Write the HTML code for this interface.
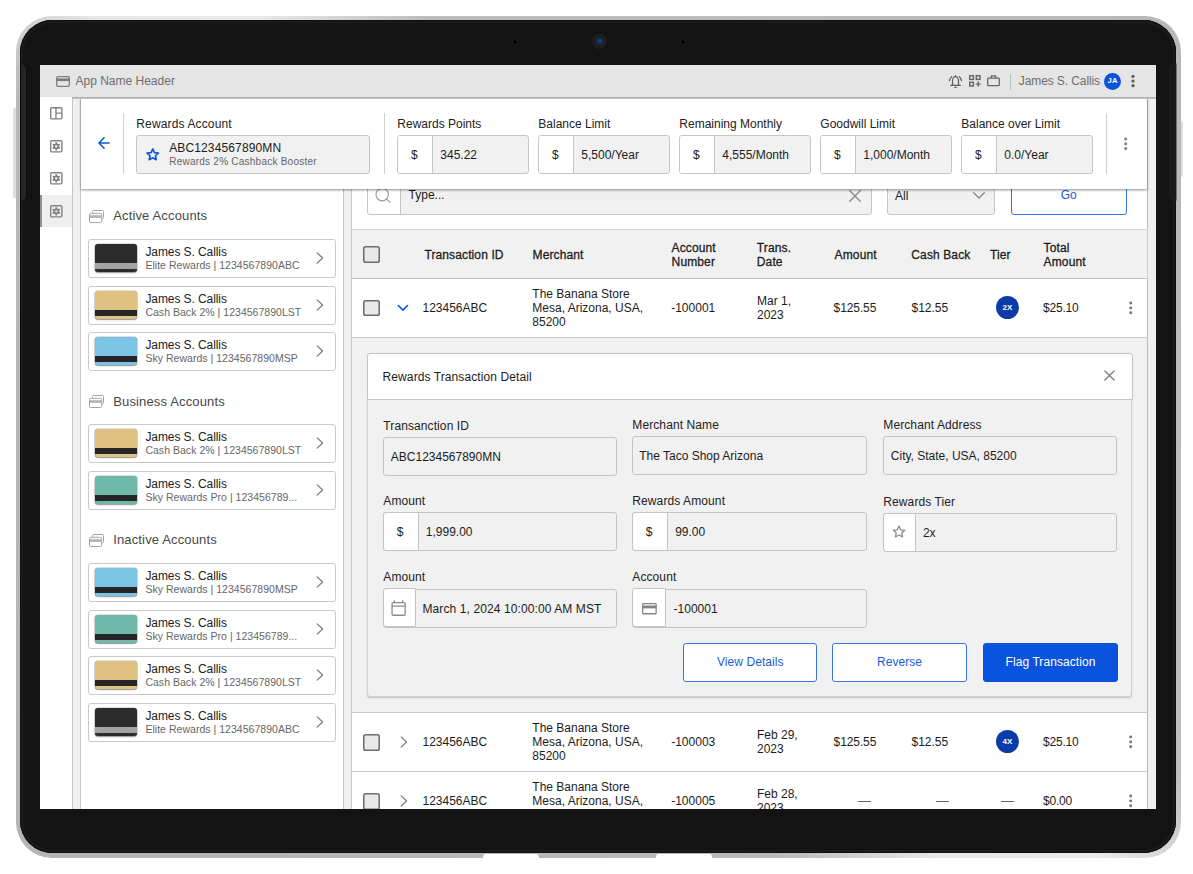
<!DOCTYPE html>
<html>
<head>
<meta charset="utf-8">
<title>Rewards Account</title>
<style>
*{box-sizing:border-box;margin:0;padding:0}
html,body{width:1193px;height:874px;background:#fff;overflow:hidden}
body{font-family:"Liberation Sans",sans-serif;font-size:12px;color:#1c1c1c;position:relative}
.a{position:absolute}
.t{position:absolute;white-space:nowrap;line-height:14px}
svg{position:absolute;overflow:visible}
#silver{left:16px;top:16px;width:1164.5px;height:841.5px;border-radius:36px;background:linear-gradient(45deg,#b4b4b4 0%,#b9b9b9 38%,#e7e7e7 46%,#e9e9e9 54%,#bebebe 62%,#b8b8b8 100%)}
#blk{left:20px;top:20px;width:1156px;height:833px;border-radius:32.5px;background:#131313;box-shadow:inset 0 0 0 .8px #0b0b0b, inset 0 0 0 3.2px #1b1b1b}
.sbtn{background:#dedede;border-radius:2px}
#screen{left:40px;top:65px;width:1116px;height:744px;overflow:hidden;background:#fff}
#pg{left:-40px;top:-65px;width:1193px;height:874px}
#hdr{left:40px;top:65px;width:1116px;height:32px;background:#e5e5e5}
#hdrsh{left:40px;top:96.5px;width:1116px;height:2px;background:linear-gradient(#a9a9a9,#c9c9c9)}
.g{color:#6e6e6e}
.strip{background:#f0f0f0;border-left:1px solid #c6c6c6;border-right:1px solid #c9c9c9}
#top{left:80.5px;top:98px;width:1066.5px;height:91px;background:#fff;box-shadow:0 1px 2.5px rgba(0,0,0,.45)}
.vd{width:1px;background:#cfcfcf}
.fld{position:absolute;height:39px;border:1px solid #c6c6c6;border-radius:3px;background:#f1f1f1;overflow:hidden}
.pre{position:absolute;left:0;top:0;bottom:0;width:35px;background:#fff;border-right:1px solid #c6c6c6}
.lbl{position:absolute;white-space:nowrap;line-height:14px;color:#222}
.blue{color:#1a5cd6}
.sec{position:absolute;white-space:nowrap;line-height:14px;font-size:13px;letter-spacing:.15px;color:#474747;left:113.2px}
.acc{position:absolute;left:88px;width:248px;height:38.5px;border:1px solid #c9c9c9;border-radius:3px;background:#fff}
.th{position:absolute;left:6.1px;top:4.2px;width:42px;height:27.6px;border-radius:3px;overflow:hidden;box-shadow:0 1px 1.5px rgba(0,0,0,.35),0 0 0 .5px rgba(0,0,0,.25)}
.th i{position:absolute;left:0;right:0;top:18.4px;height:6px;background:#252525}
.acc .n{position:absolute;left:56.4px;top:5px;white-space:nowrap;line-height:14px;letter-spacing:-.08px}
.acc .d{position:absolute;left:56.4px;top:18.2px;white-space:nowrap;line-height:14px;font-size:10.5px;letter-spacing:.03px;color:#666}
.acc svg{left:226.5px;top:11.6px}
.th2{position:absolute;white-space:nowrap;line-height:14px;color:#1c1c1c;-webkit-text-stroke:.28px #1c1c1c;letter-spacing:.12px}
.cb{position:absolute;left:363.3px;width:16.4px;height:16.4px;border-radius:2.6px;background:#e9e9e9;box-shadow:inset 0 0 0 1.55px #6e6e6e}
.td{position:absolute;white-space:nowrap;line-height:14px}
.hl{position:absolute;height:1px;background:#c8c8c8;left:352px;width:795.5px}
.badge{position:absolute;left:996px;width:23px;height:23px;border-radius:50%;background:#0b3ba6;color:#fff;font-weight:700;font-size:8px;line-height:23px;text-align:center;letter-spacing:.2px}
.dash{position:absolute;height:1.5px;width:13px;background:#666}
.inp{position:absolute;width:234px;height:39px;border:1px solid #c4c4c4;border-radius:3px;background:#f1f1f1}
.inp .pre{left:-1px;top:-1px;bottom:-1px;border:1px solid #c4c4c4;border-radius:3px 0 0 3px}
.inp .pre.up{top:-2px;bottom:0}
.inp .v{position:absolute;white-space:nowrap;line-height:14px;top:12px}
.btn{position:absolute;top:643px;width:134px;height:38.5px;border:1px solid #3a76de;border-radius:3px;background:#fff;color:#1a5cd6;text-align:center;line-height:36.5px;letter-spacing:.07px}
</style>
</head>
<body>
<!-- tablet frame -->
<div class="a sbtn" style="left:12.8px;top:108px;width:5px;height:90px"></div>
<div class="a sbtn" style="left:1178px;top:120.5px;width:5px;height:56px"></div>
<div class="a" id="silver"></div>
<div class="a" style="left:483px;top:854.3px;width:56px;height:5px;background:#fff;border-radius:3px 3px 0 0"></div>
<div class="a" style="left:656px;top:854.3px;width:56px;height:5px;background:#fff;border-radius:3px 3px 0 0"></div>
<div class="a" id="blk"></div>
<div class="a" style="left:20.5px;top:63.5px;width:5.3px;height:137px;background:#252525;border-radius:0 5px 5px 0;box-shadow:0 0 0 .6px #0a0a0a"></div>
<div class="a" style="left:1170px;top:64px;width:5.5px;height:136px;background:#1a1a1a;border-radius:5px 0 0 5px;box-shadow:0 0 0 .5px #2a2a2a"></div>
<div class="a" style="left:591.5px;top:33.5px;width:15px;height:15px;border-radius:50%;background:#1f1f1f"></div>
<div class="a" style="left:595.5px;top:37.5px;width:7px;height:7px;border-radius:50%;background:radial-gradient(circle at 58% 38%,#1d4686 0,#152d52 50%,#0f1826 100%)"></div>
<div class="a" style="left:513px;top:39.5px;width:4px;height:4px;border-radius:50%;background:#000;box-shadow:0 0 0 1px #1d1d1d"></div>
<div class="a" style="left:680.5px;top:39.5px;width:4px;height:4px;border-radius:50%;background:#000;box-shadow:0 0 0 1px #1d1d1d"></div>

<div class="a" id="screen"><div class="a" id="pg">
<!-- base columns -->
<div class="a strip" style="left:72px;top:97px;width:8.5px;height:720px"></div>
<div class="a strip" style="left:343px;top:97px;width:9px;height:720px"></div>
<div class="a strip" style="left:1147px;top:97px;width:9px;height:720px;border-right:0;border-left-color:#b9b9b9"></div>

<!-- left panel -->
<svg style="left:89px;top:209.8px" width="15" height="13" viewBox="0 0 15 13" fill="none" stroke="#a3a3a3" stroke-width="1"><path d="M3.6 2.8V1.5a1 1 0 0 1 1-1h8.9a1 1 0 0 1 1 1v6a1 1 0 0 1-1 1h-1"/><rect x=".5" y="3.3" width="12.2" height="9.2" rx="1.3" fill="#fff"/><rect x=".9" y="5.2" width="11.4" height="2.7" fill="#b4b4b4" stroke="none"/></svg><div class="sec" style="top:209.4px">Active Accounts</div>
<div class="acc" style="top:239px"><div class="th" style="background:#2c2c2c"><i style="background:#a3a3a3"></i></div><div class="n">James S. Callis</div><div class="d">Elite Rewards | 1234567890ABC</div><svg width="8" height="12" viewBox="0 0 8 12" fill="none" stroke="#7d7d7d" stroke-width="1.3" stroke-linecap="round" stroke-linejoin="round"><path d="M1.2 .9 6.6 6l-5.4 5.1"/></svg></div>
<div class="acc" style="top:286px"><div class="th" style="background:#dfc27f"><i style="background:#252525"></i></div><div class="n">James S. Callis</div><div class="d">Cash Back 2% | 1234567890LST</div><svg width="8" height="12" viewBox="0 0 8 12" fill="none" stroke="#7d7d7d" stroke-width="1.3" stroke-linecap="round" stroke-linejoin="round"><path d="M1.2 .9 6.6 6l-5.4 5.1"/></svg></div>
<div class="acc" style="top:332px"><div class="th" style="background:#7bc4e6"><i style="background:#252525"></i></div><div class="n">James S. Callis</div><div class="d">Sky Rewards | 1234567890MSP</div><svg width="8" height="12" viewBox="0 0 8 12" fill="none" stroke="#7d7d7d" stroke-width="1.3" stroke-linecap="round" stroke-linejoin="round"><path d="M1.2 .9 6.6 6l-5.4 5.1"/></svg></div>
<svg style="left:89px;top:395px" width="15" height="13" viewBox="0 0 15 13" fill="none" stroke="#a3a3a3" stroke-width="1"><path d="M3.6 2.8V1.5a1 1 0 0 1 1-1h8.9a1 1 0 0 1 1 1v6a1 1 0 0 1-1 1h-1"/><rect x=".5" y="3.3" width="12.2" height="9.2" rx="1.3" fill="#fff"/><rect x=".9" y="5.2" width="11.4" height="2.7" fill="#b4b4b4" stroke="none"/></svg><div class="sec" style="top:394.6px">Business Accounts</div>
<div class="acc" style="top:424px"><div class="th" style="background:#dfc27f"><i style="background:#252525"></i></div><div class="n">James S. Callis</div><div class="d">Cash Back 2% | 1234567890LST</div><svg width="8" height="12" viewBox="0 0 8 12" fill="none" stroke="#7d7d7d" stroke-width="1.3" stroke-linecap="round" stroke-linejoin="round"><path d="M1.2 .9 6.6 6l-5.4 5.1"/></svg></div>
<div class="acc" style="top:471px"><div class="th" style="background:#6fb9ab"><i style="background:#252525"></i></div><div class="n">James S. Callis</div><div class="d">Sky Rewards Pro | 123456789...</div><svg width="8" height="12" viewBox="0 0 8 12" fill="none" stroke="#7d7d7d" stroke-width="1.3" stroke-linecap="round" stroke-linejoin="round"><path d="M1.2 .9 6.6 6l-5.4 5.1"/></svg></div>
<svg style="left:89px;top:533.6px" width="15" height="13" viewBox="0 0 15 13" fill="none" stroke="#a3a3a3" stroke-width="1"><path d="M3.6 2.8V1.5a1 1 0 0 1 1-1h8.9a1 1 0 0 1 1 1v6a1 1 0 0 1-1 1h-1"/><rect x=".5" y="3.3" width="12.2" height="9.2" rx="1.3" fill="#fff"/><rect x=".9" y="5.2" width="11.4" height="2.7" fill="#b4b4b4" stroke="none"/></svg><div class="sec" style="top:533.2px">Inactive Accounts</div>
<div class="acc" style="top:563px"><div class="th" style="background:#7bc4e6"><i style="background:#252525"></i></div><div class="n">James S. Callis</div><div class="d">Sky Rewards | 1234567890MSP</div><svg width="8" height="12" viewBox="0 0 8 12" fill="none" stroke="#7d7d7d" stroke-width="1.3" stroke-linecap="round" stroke-linejoin="round"><path d="M1.2 .9 6.6 6l-5.4 5.1"/></svg></div>
<div class="acc" style="top:610px"><div class="th" style="background:#6fb9ab"><i style="background:#252525"></i></div><div class="n">James S. Callis</div><div class="d">Sky Rewards Pro | 123456789...</div><svg width="8" height="12" viewBox="0 0 8 12" fill="none" stroke="#7d7d7d" stroke-width="1.3" stroke-linecap="round" stroke-linejoin="round"><path d="M1.2 .9 6.6 6l-5.4 5.1"/></svg></div>
<div class="acc" style="top:656px"><div class="th" style="background:#dfc27f"><i style="background:#252525"></i></div><div class="n">James S. Callis</div><div class="d">Cash Back 2% | 1234567890LST</div><svg width="8" height="12" viewBox="0 0 8 12" fill="none" stroke="#7d7d7d" stroke-width="1.3" stroke-linecap="round" stroke-linejoin="round"><path d="M1.2 .9 6.6 6l-5.4 5.1"/></svg></div>
<div class="acc" style="top:703px"><div class="th" style="background:#2c2c2c"><i style="background:#a3a3a3"></i></div><div class="n">James S. Callis</div><div class="d">Elite Rewards | 1234567890ABC</div><svg width="8" height="12" viewBox="0 0 8 12" fill="none" stroke="#7d7d7d" stroke-width="1.3" stroke-linecap="round" stroke-linejoin="round"><path d="M1.2 .9 6.6 6l-5.4 5.1"/></svg></div>

<!-- right panel -->
<div class="a" style="left:367px;top:176px;width:34px;height:38.5px;border:1px solid #c6c6c6;border-radius:3px 0 0 3px;background:#fff"></div>
<svg style="left:375px;top:187px" width="16" height="16" viewBox="0 0 16 16" fill="none" stroke="#9a9a9a" stroke-width="1.15" stroke-linecap="round"><circle cx="7.2" cy="7.6" r="6.2"/><path d="M11.8 12.3 15 15.4"/></svg>
<div class="a" style="left:400px;top:176px;width:472px;height:38.5px;border:1px solid #c6c6c6;border-radius:0 3px 3px 0;background:#f1f1f1"></div>
<div class="t" style="left:408.6px;top:188.3px">Type...</div>
<svg style="left:848.6px;top:190.3px" width="12" height="12" viewBox="0 0 12 12" fill="none" stroke="#8a8a8a" stroke-width="1.4" stroke-linecap="round"><path d="M.8 .8l10.4 10.4M11.2 .8.8 11.2"/></svg>
<div class="a" style="left:887px;top:176px;width:107.5px;height:38.5px;border:1px solid #c6c6c6;border-radius:3px;background:#f1f1f1"></div>
<div class="t" style="left:895px;top:189px">All</div>
<svg style="left:972.6px;top:192.4px" width="12" height="7" viewBox="0 0 12 7" fill="none" stroke="#8a8a8a" stroke-width="1.4" stroke-linecap="round" stroke-linejoin="round"><path d="M.7 .7 6 6l5.3-5.3"/></svg>
<div class="a" style="left:1011px;top:176px;width:115.5px;height:38.5px;border:1px solid #3a76de;border-radius:3px;background:#fff"></div>
<div class="t blue" style="left:1011px;width:115.5px;text-align:center;top:188.3px">Go</div>
<div class="a" style="left:352px;top:229px;width:796px;height:50px;background:#f1f1f1;border-top:1px solid #d2d2d2;border-bottom:1px solid #bfbfbf;border-right:1px solid #cfcfcf"></div>
<div class="cb" style="top:246.3px"></div>
<div class="th2" style="left:424.4px;top:248.3px">Transaction ID</div>
<div class="th2" style="left:532.6px;top:248.3px">Merchant</div>
<div class="th2" style="left:671.6px;top:241.4px">Account<br>Number</div>
<div class="th2" style="left:756.8px;top:241.4px">Trans.<br>Date</div>
<div class="th2" style="left:834.6px;top:248.3px">Amount</div>
<div class="th2" style="left:911.3px;top:248.3px">Cash Back</div>
<div class="th2" style="left:990px;top:248.3px">Tier</div>
<div class="th2" style="left:1043.6px;top:241.4px">Total<br>Amount</div>
<div class="cb" style="top:300.1px"></div><svg style="left:397px;top:303.8px" width="12" height="8" viewBox="0 0 12 8" fill="none" stroke="#0b55dc" stroke-width="1.6" stroke-linecap="round" stroke-linejoin="round"><path d="M1.3 1.5 5.9 6.1l4.6-4.6"/></svg><div class="td" style="left:422.5px;top:301.0px">123456ABC</div><div class="td" style="left:532.3px;top:287.0px">The Banana Store<br>Mesa, Arizona, USA,<br>85200</div><div class="td" style="left:671.2px;top:301.0px">-100001</div><div class="td" style="left:757px;top:294.0px">Mar 1,<br>2023</div><div class="td" style="left:833.6px;top:301.0px;letter-spacing:-.1px">$125.55</div><div class="td" style="left:911.5px;top:301.0px">$12.55</div><div class="badge" style="top:296.0px">2X</div><div class="td" style="left:1043px;top:301.0px;letter-spacing:-.2px">$25.10</div><svg style="left:1128.5px;top:301.0px" width="4" height="14" viewBox="0 0 4 14" fill="#747474"><circle cx="1.7" cy="2" r="1.45"/><circle cx="1.7" cy="6.9" r="1.45"/><circle cx="1.7" cy="11.8" r="1.45"/></svg><div class="hl" style="top:337.1px"></div>

<div class="a" style="left:352px;top:338px;width:795px;height:374.5px;background:#f1f1f1"></div>
<div class="hl" style="top:712px"></div>
<div class="a" style="left:367px;top:399px;width:765px;height:298px;border:1px solid #d2d2d2;border-top:0;border-radius:0 0 3px 3px;background:#f1f1f1;box-shadow:0 1px 1.5px rgba(0,0,0,.22)"></div>
<div class="a" style="left:367px;top:353px;width:766px;height:47px;background:#fff;border:1px solid #c4c4c4;border-radius:3px 3px 0 0"></div>
<div class="t" style="left:382.6px;top:370.2px;letter-spacing:.09px">Rewards Transaction Detail</div>
<svg style="left:1104.2px;top:370.1px" width="11" height="11" viewBox="0 0 11 11" fill="none" stroke="#808080" stroke-width="1.4" stroke-linecap="round"><path d="M.9 .9l9.2 9.2M10.1 .9.9 10.1"/></svg>
<div class="lbl" style="left:383.3px;top:418.8px;letter-spacing:.1px">Transanction ID</div><div class="inp" style="left:383px;top:437px;width:234px"><div class="v" style="left:6.8px">ABC1234567890MN</div></div>
<div class="lbl" style="left:632.3px;top:418.2px;letter-spacing:.1px">Merchant Name</div><div class="inp" style="left:632px;top:436px;width:235px"><div class="v" style="left:6.2px">The Taco Shop Arizona</div></div>
<div class="lbl" style="left:883.3px;top:418.2px;letter-spacing:.1px">Merchant Address</div><div class="inp" style="left:883px;top:436px;width:234px"><div class="v" style="left:6.8px">City, State, USA, 85200</div></div>
<div class="lbl" style="left:383.3px;top:494.4px;letter-spacing:.1px">Amount</div><div class="inp" style="left:383px;top:512px;width:234px"><div class="pre" style="width:36px"></div><div class="v" style="left:-1.4px;width:35px;text-align:center">$</div><div class="v" style="left:41.8px;letter-spacing:0px">1,999.00</div></div>
<div class="lbl" style="left:632.3px;top:494.4px;letter-spacing:.1px">Rewards Amount</div><div class="inp" style="left:632px;top:512px;width:235px"><div class="pre" style="width:36px"></div><div class="v" style="left:-1.4px;width:35px;text-align:center">$</div><div class="v" style="left:42.2px;letter-spacing:0px">99.00</div></div>
<div class="lbl" style="left:883.3px;top:495.4px;letter-spacing:.1px">Rewards Tier</div><div class="inp" style="left:883px;top:513px;width:234px"><div class="pre" style="width:33px"></div><svg style="left:0;top:0" width="30" height="37" viewBox="0 0 30 37" fill="none" stroke="#8a8a8a" stroke-width="1.3" stroke-linejoin="round"><path d="M15.00 12.10L16.68 15.79L20.71 16.25L17.71 18.98L18.53 22.95L15.00 20.95L11.47 22.95L12.29 18.98L9.29 16.25L13.32 15.79z"/></svg><div class="v" style="left:38.9px;letter-spacing:0px">2x</div></div>
<div class="lbl" style="left:383.3px;top:570.4px;letter-spacing:.1px">Amount</div><div class="inp" style="left:383px;top:589px;width:234px"><div class="pre up" style="width:33px"></div><svg style="left:0;top:0" width="30" height="37" viewBox="0 0 30 37" fill="none" stroke="#8a8a8a" stroke-width="1.3" stroke-linejoin="round"><rect x="8.05" y="12.55" width="13.1" height="12.7" rx="1.2"/><path d="M8.05 16.2h13.1M10.3 10.3v2.3M18.7 10.3v2.3"/></svg><div class="v" style="left:38.5px;letter-spacing:0.1px">March 1, 2024 10:00:00 AM MST</div></div>
<div class="lbl" style="left:632.3px;top:570.4px;letter-spacing:.1px">Account</div><div class="inp" style="left:632px;top:589px;width:235px"><div class="pre up" style="width:34px"></div><svg style="left:9.2px;top:12.5px" width="15" height="12" viewBox="0 0 15 12"><rect x=".65" y=".65" width="13.5" height="10.1" rx=".7" fill="none" stroke="#858585" stroke-width="1.3"/><rect x=".65" y="2.5" width="13.5" height="2.9" fill="#858585"/></svg><div class="v" style="left:40.6px;letter-spacing:0px">-100001</div></div>
<div class="btn" style="left:683.3px">View Details</div>
<div class="btn" style="left:832px;width:135px">Reverse</div>
<div class="btn" style="left:983px;width:135px;background:#0a53dc;border-color:#0a53dc;color:#fff">Flag Transaction</div>
<div class="cb" style="top:734.2px"></div><svg style="left:399.8px;top:736.1px" width="8" height="12" viewBox="0 0 8 12" fill="none" stroke="#7d7d7d" stroke-width="1.3" stroke-linecap="round" stroke-linejoin="round"><path d="M1.2 .9 6.6 6l-5.4 5.1"/></svg><div class="td" style="left:422.5px;top:735.1px">123456ABC</div><div class="td" style="left:532.3px;top:721.1px">The Banana Store<br>Mesa, Arizona, USA,<br>85200</div><div class="td" style="left:671.2px;top:735.1px">-100003</div><div class="td" style="left:757px;top:728.1px">Feb 29,<br>2023</div><div class="td" style="left:833.6px;top:735.1px;letter-spacing:-.1px">$125.55</div><div class="td" style="left:911.5px;top:735.1px">$12.55</div><div class="badge" style="top:730.1px">4X</div><div class="td" style="left:1043px;top:735.1px;letter-spacing:-.2px">$25.10</div><svg style="left:1128.5px;top:735.1px" width="4" height="14" viewBox="0 0 4 14" fill="#747474"><circle cx="1.7" cy="2" r="1.45"/><circle cx="1.7" cy="6.9" r="1.45"/><circle cx="1.7" cy="11.8" r="1.45"/></svg><div class="hl" style="top:771.2px"></div>
<div class="cb" style="top:793.2px"></div><svg style="left:399.8px;top:795.1px" width="8" height="12" viewBox="0 0 8 12" fill="none" stroke="#7d7d7d" stroke-width="1.3" stroke-linecap="round" stroke-linejoin="round"><path d="M1.2 .9 6.6 6l-5.4 5.1"/></svg><div class="td" style="left:422.5px;top:794.1px">123456ABC</div><div class="td" style="left:532.3px;top:780.1px">The Banana Store<br>Mesa, Arizona, USA,<br>85200</div><div class="td" style="left:671.2px;top:794.1px">-100005</div><div class="td" style="left:757px;top:787.1px">Feb 28,<br>2023</div><div class="dash" style="left:858px;top:800.8px"></div><div class="dash" style="left:936px;top:800.8px"></div><div class="dash" style="left:1001.3px;top:800.8px"></div><div class="td" style="left:1043px;top:794.1px;letter-spacing:-.2px">$0.00</div><svg style="left:1128.5px;top:794.1px" width="4" height="14" viewBox="0 0 4 14" fill="#747474"><circle cx="1.7" cy="2" r="1.45"/><circle cx="1.7" cy="6.9" r="1.45"/><circle cx="1.7" cy="11.8" r="1.45"/></svg><div class="hl" style="top:830.2px"></div>

<!-- top panel -->
<div class="a" id="top"></div>
<svg style="left:97.8px;top:137.2px" width="13" height="12" viewBox="0 0 13 12" fill="none" stroke="#0b55dc" stroke-width="1.5" stroke-linecap="round" stroke-linejoin="round"><path d="M6.1 .7 .9 6l5.2 5.3M1.2 6h9.9"/></svg>
<div class="a vd" style="left:123.3px;top:113px;height:61px"></div>
<div class="lbl" style="left:136.3px;top:117px;letter-spacing:.14px">Rewards Account</div>
<div class="fld" style="left:136px;top:135px;width:234px">
 <svg style="left:0;top:0" width="30" height="37" viewBox="0 0 30 37" fill="none" stroke="#0b55dc" stroke-width="1.6" stroke-linejoin="round"><path d="M15.75 12.90L17.43 16.59L21.46 17.05L18.46 19.78L19.28 23.75L15.75 21.75L12.22 23.75L13.04 19.78L10.04 17.05L14.07 16.59z"/></svg>
 <div class="t" style="left:32.2px;top:5px;letter-spacing:.13px">ABC1234567890MN</div>
 <div class="t" style="left:32.2px;top:19.3px;font-size:10px;letter-spacing:.24px;color:#666">Rewards 2% Cashback Booster</div>
</div>
<div class="a vd" style="left:384.2px;top:113px;height:61px"></div>
<div class="lbl" style="left:397.3px;top:117px">Rewards Points</div>
<div class="fld" style="left:397.3px;top:135px;width:132px"><div class="pre"></div><div class="t" style="left:-1.5px;width:35px;text-align:center;top:11.5px">$</div><div class="t" style="left:42px;top:11.5px">345.22</div></div>
<div class="lbl" style="left:538.3px;top:117px">Balance Limit</div>
<div class="fld" style="left:538.3px;top:135px;width:132px"><div class="pre"></div><div class="t" style="left:-1.5px;width:35px;text-align:center;top:11.5px">$</div><div class="t" style="left:42px;top:11.5px">5,500/Year</div></div>
<div class="lbl" style="left:679.3px;top:117px">Remaining Monthly</div>
<div class="fld" style="left:679.3px;top:135px;width:132px"><div class="pre"></div><div class="t" style="left:-1.5px;width:35px;text-align:center;top:11.5px">$</div><div class="t" style="left:42px;top:11.5px">4,555/Month</div></div>
<div class="lbl" style="left:820.3px;top:117px">Goodwill Limit</div>
<div class="fld" style="left:820.3px;top:135px;width:132px"><div class="pre"></div><div class="t" style="left:-1.5px;width:35px;text-align:center;top:11.5px">$</div><div class="t" style="left:42px;top:11.5px">1,000/Month</div></div>
<div class="lbl" style="left:961.3px;top:117px">Balance over Limit</div>
<div class="fld" style="left:961.3px;top:135px;width:132px"><div class="pre"></div><div class="t" style="left:-1.5px;width:35px;text-align:center;top:11.5px">$</div><div class="t" style="left:42px;top:11.5px">0.0/Year</div></div>

<div class="a vd" style="left:1106.4px;top:113px;height:61px"></div>
<svg style="left:1123.8px;top:136.6px" width="4" height="14" viewBox="0 0 4 14" fill="#858585"><circle cx="1.7" cy="2" r="1.55"/><circle cx="1.7" cy="6.8" r="1.55"/><circle cx="1.7" cy="11.6" r="1.55"/></svg>

<!-- header -->
<div class="a" id="hdr"></div><div class="a" id="hdrsh"></div>
<svg style="left:56px;top:76px" width="14" height="11" viewBox="0 0 14 11"><rect x=".7" y=".7" width="12.6" height="9.6" rx="1.3" fill="none" stroke="#7c7c7c" stroke-width="1.3"/><rect x=".7" y="2.4" width="12.6" height="2.7" fill="#7c7c7c"/></svg>
<div class="t g" style="left:75.5px;top:74px">App Name Header</div>
<svg style="left:949px;top:75px" width="13" height="13" viewBox="0 0 13 13" fill="none" stroke="#5e5e5e" stroke-width="1.25" stroke-linecap="round" stroke-linejoin="round"><path d="M3.5 10.2V5.7A3 4.1 0 0 1 9.5 5.7v4.5"/><path d="M6.5 .7v.9"/><path d="M1.7 10.3h9.6"/><path d="M5.8 12.4h1.4"/><path d="M2.6 1.7Q.9 3.3 .5 5.6"/><path d="M10.4 1.7Q12.1 3.3 12.5 5.6"/></svg>
<svg style="left:969px;top:75.3px" width="12" height="12" viewBox="0 0 12 12" fill="none" stroke="#666" stroke-width="1.45"><rect x=".7" y=".7" width="3.7" height="3.7"/><rect x="7.3" y=".7" width="3.7" height="3.7"/><rect x=".7" y="7.3" width="3.7" height="3.7"/><path d="M9.2 6.6v5M6.7 9.1h5"/></svg>
<svg style="left:987px;top:75.3px" width="13" height="12" viewBox="0 0 13 12" fill="none" stroke="#666" stroke-width="1.3" stroke-linejoin="round"><rect x=".7" y="3.2" width="11.6" height="7.45" rx=".8"/><path d="M4.3 3V.8h4.4V3"/></svg>
<div class="a" style="left:1010px;top:73.5px;width:1px;height:16px;background:#bdbdbd"></div>
<div class="t g" style="left:1018.8px;top:74px;letter-spacing:-.1px">James S. Callis</div>
<div class="a" style="left:1104px;top:73px;width:17px;height:17px;border-radius:50%;background:#0a53dc"></div>
<div class="t" style="left:1104.2px;top:74.4px;width:17px;text-align:center;color:#fff;font-weight:700;font-size:7.6px;letter-spacing:.35px">JA</div>
<svg style="left:1130.9px;top:74px" width="4" height="14" viewBox="0 0 4 14" fill="#5c5c5c"><circle cx="2" cy="2.3" r="1.6"/><circle cx="2" cy="7.1" r="1.6"/><circle cx="2" cy="11.7" r="1.6"/></svg>

<!-- nav -->
<div class="a" style="left:40px;top:97px;width:32px;height:720px;background:#fff"></div>
<div class="a" style="left:40px;top:195px;width:32px;height:32px;background:#efefef;border-left:2px solid #8f8f8f"></div>
<svg style="left:50.3px;top:107.3px" width="12.5" height="12.5" viewBox="0 0 12.5 12.5" fill="none" stroke="#828282" stroke-width="1.4"><rect x=".7" y=".7" width="11.2" height="11.2" rx="1.1"/><path d="M5.95 .7v11.1M5.95 6.1h5.9"/></svg>
<svg style="left:50.3px;top:140.4px" width="12.5" height="12.5" viewBox="0 0 12.5 12.5" fill="none" stroke="#828282" stroke-width="1.4"><rect x=".7" y=".7" width="11.2" height="11.2" rx="1.1"/><g fill="#828282" stroke="none"><circle cx="6.3" cy="6.3" r="2.8"/><rect x="5.35" y="2.2" width="1.9" height="2.3" rx=".3" transform="rotate(0 6.3 6.3)"/><rect x="5.35" y="2.2" width="1.9" height="2.3" rx=".3" transform="rotate(60 6.3 6.3)"/><rect x="5.35" y="2.2" width="1.9" height="2.3" rx=".3" transform="rotate(120 6.3 6.3)"/><rect x="5.35" y="2.2" width="1.9" height="2.3" rx=".3" transform="rotate(180 6.3 6.3)"/><rect x="5.35" y="2.2" width="1.9" height="2.3" rx=".3" transform="rotate(240 6.3 6.3)"/><rect x="5.35" y="2.2" width="1.9" height="2.3" rx=".3" transform="rotate(300 6.3 6.3)"/><circle cx="6.3" cy="6.3" r="1.15" fill="#fff"/></g></svg>
<svg style="left:50.3px;top:172.4px" width="12.5" height="12.5" viewBox="0 0 12.5 12.5" fill="none" stroke="#828282" stroke-width="1.4"><rect x=".7" y=".7" width="11.2" height="11.2" rx="1.1"/><g fill="#828282" stroke="none"><circle cx="6.3" cy="6.3" r="2.8"/><rect x="5.35" y="2.2" width="1.9" height="2.3" rx=".3" transform="rotate(0 6.3 6.3)"/><rect x="5.35" y="2.2" width="1.9" height="2.3" rx=".3" transform="rotate(60 6.3 6.3)"/><rect x="5.35" y="2.2" width="1.9" height="2.3" rx=".3" transform="rotate(120 6.3 6.3)"/><rect x="5.35" y="2.2" width="1.9" height="2.3" rx=".3" transform="rotate(180 6.3 6.3)"/><rect x="5.35" y="2.2" width="1.9" height="2.3" rx=".3" transform="rotate(240 6.3 6.3)"/><rect x="5.35" y="2.2" width="1.9" height="2.3" rx=".3" transform="rotate(300 6.3 6.3)"/><circle cx="6.3" cy="6.3" r="1.15" fill="#fff"/></g></svg>
<svg style="left:50.3px;top:205.4px" width="12.5" height="12.5" viewBox="0 0 12.5 12.5" fill="none" stroke="#828282" stroke-width="1.4"><rect x=".7" y=".7" width="11.2" height="11.2" rx="1.1"/><g fill="#828282" stroke="none"><circle cx="6.3" cy="6.3" r="2.8"/><rect x="5.35" y="2.2" width="1.9" height="2.3" rx=".3" transform="rotate(0 6.3 6.3)"/><rect x="5.35" y="2.2" width="1.9" height="2.3" rx=".3" transform="rotate(60 6.3 6.3)"/><rect x="5.35" y="2.2" width="1.9" height="2.3" rx=".3" transform="rotate(120 6.3 6.3)"/><rect x="5.35" y="2.2" width="1.9" height="2.3" rx=".3" transform="rotate(180 6.3 6.3)"/><rect x="5.35" y="2.2" width="1.9" height="2.3" rx=".3" transform="rotate(240 6.3 6.3)"/><rect x="5.35" y="2.2" width="1.9" height="2.3" rx=".3" transform="rotate(300 6.3 6.3)"/><circle cx="6.3" cy="6.3" r="1.15" fill="#efefef"/></g></svg>

</div></div>
</body>
</html>
